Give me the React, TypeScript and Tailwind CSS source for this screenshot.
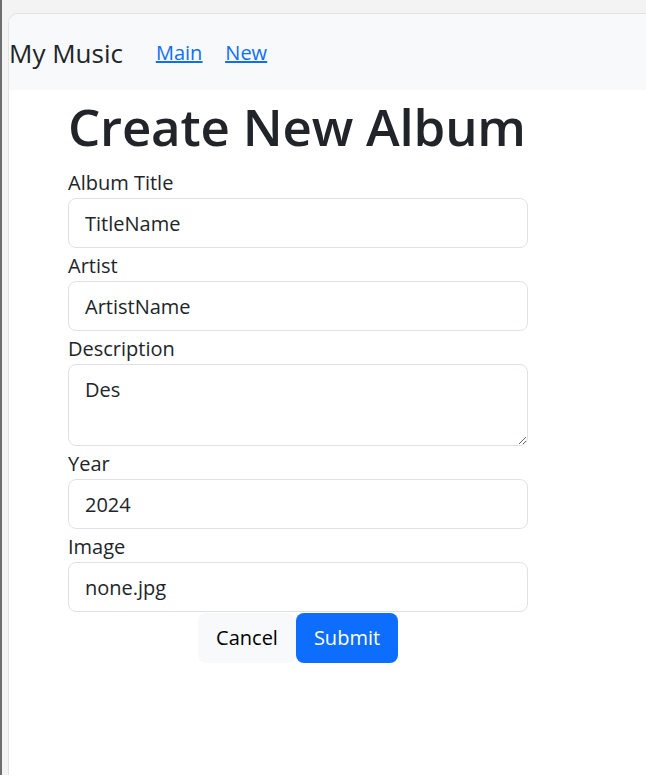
export default function App() {
  const fields = [
    { label: 'Album Title', value: 'TitleName' },
    { label: 'Artist', value: 'ArtistName' },
    { label: 'Description', value: 'Des', area: true },
    { label: 'Year', value: '2024' },
    { label: 'Image', value: 'none.jpg' },
  ];

  return (
    <div className="flex h-[775px] w-[646px] bg-[#f3f3f3] font-['Open_Sans',sans-serif] text-[#212529]">
      {/* window edge */}
      <div className="w-[2px] bg-[#6e6e6e]" />
      <div className="ml-[6px] mt-[13px] flex flex-1 flex-col overflow-hidden rounded-tl-[10px] border-l border-t border-[#e2e2e2] bg-white">
        {/* Navbar */}
        <nav className="flex h-[76px] items-center bg-[#f8f9fa]">
          <span className="mt-[2px] text-[26px] leading-none">My Music</span>
          <div className="ml-[33px] mt-[2px] flex gap-[23px] text-[20px] text-[#0d6efd] underline">
            <a href="#">Main</a>
            <a href="#">New</a>
          </div>
        </nav>

        {/* Form */}
        <main className="ml-[59px] w-[460px]">
          <h1 className="mb-[9px] mt-[6px] whitespace-nowrap text-[51px] font-semibold leading-[60px] tracking-[-0.2px]">
            Create New Album
          </h1>
          <form className="flex flex-col">
            {fields.map((f) => (
              <div key={f.label} className="flex flex-col">
                <label className="pt-[3px] text-[20px] leading-[30px]">{f.label}</label>
                {f.area ? (
                  <textarea
                    defaultValue={f.value}
                    className="h-[82px] rounded-[8px] border border-[#dee2e6] px-[16px] py-[10px] text-[20px] leading-[30px] outline-none"
                  />
                ) : (
                  <input
                    defaultValue={f.value}
                    className="h-[50px] rounded-[8px] border border-[#dee2e6] px-[16px] text-[20px] outline-none"
                  />
                )}
              </div>
            ))}
            <div className="flex justify-center pt-[1px]">
              <button type="button" className="h-[50px] w-[98px] rounded-[8px] bg-[#f8f9fa] text-[20px] text-black">
                Cancel
              </button>
              <button type="submit" className="h-[50px] w-[102px] rounded-[8px] bg-[#0d6efd] text-[20px] text-white">
                Submit
              </button>
            </div>
          </form>
        </main>
      </div>
    </div>
  );
}
